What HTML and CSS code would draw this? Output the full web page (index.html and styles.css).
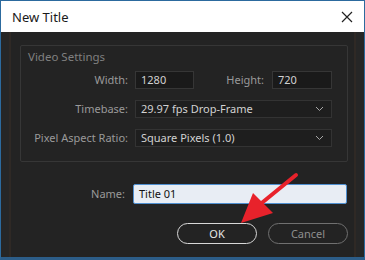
FILE: index.html
```html
<!DOCTYPE html>
<html lang="en">
<head>
  <meta charset="UTF-8" />
  <title>New Title</title>
  <link rel="stylesheet" href="styles.css">
</head>
<body>

<div class="window">
  <!-- Title bar -->
  <div class="titlebar">
    <span class="title">New Title</span>
    <svg class="close" width="12" height="12" viewBox="0 0 12 12">
      <path d="M1 1 L11 11 M11 1 L1 11" stroke="#222" stroke-width="1.2" fill="none"/>
    </svg>
  </div>

  <!-- Dialog body -->
  <div class="dialog">
    <div class="panel">
      <div class="group">
        <div class="legend">Video Settings</div>
        <div class="rows">
          <label class="lbl">Width:</label>
          <div class="pair">
            <div class="field small">1280</div>
            <div class="pair-right">
              <label class="lbl">Height:</label>
              <div class="field small">720</div>
            </div>
          </div>

          <label class="lbl">Timebase:</label>
          <div class="select">
            <span>29.97 fps Drop-Frame</span>
            <svg width="9" height="6" viewBox="0 0 9 6"><path d="M1 1 L4.5 4.5 L8 1" stroke="#a8a8a8" fill="none"/></svg>
          </div>

          <label class="lbl">Pixel Aspect Ratio:</label>
          <div class="select">
            <span>Square Pixels (1.0)</span>
            <svg width="9" height="6" viewBox="0 0 9 6"><path d="M1 1 L4.5 4.5 L8 1" stroke="#a8a8a8" fill="none"/></svg>
          </div>
        </div>
      </div>

      <div class="name-row">
        <label class="lbl">Name:</label>
        <div class="name-field">Title 01</div>
      </div>

      <div class="buttons">
        <button class="btn ok">OK</button>
        <button class="btn cancel">Cancel</button>
      </div>
    </div>
  </div>

  <!-- annotation arrow -->
  <svg class="arrow" width="365" height="260" viewBox="0 0 365 260">
    <line x1="296" y1="175" x2="258" y2="206" stroke="#e8222b" stroke-width="4" stroke-linecap="round"/>
    <polygon points="241,223 253,193 273,213" fill="#e8222b"/>
  </svg>
</div>

</body>
</html>
```

FILE: styles.css
```css
* {
  box-sizing: border-box;
}

html, body {
  margin: 0;
  padding: 0;
  background: #1b3550;
  font-family: 'Noto Sans', 'Open Sans', sans-serif;
}

.window {
  position: relative;
  width: 365px;
  height: 260px;
  border: 1px solid #2c6a9e;
  border-bottom: 3px solid #2c5d88;
  display: flex;
  flex-direction: column;
  background: #262626;
}

.titlebar {
  height: 31px;
  background: #fff;
  display: flex;
  align-items: center;
  justify-content: space-between;
  padding: 0 10px 0 11px;
}

.title {
  font-size: 13px;
  color: #1a1a1a;
}

.close {
  margin-right: 1px;
}

.dialog {
  flex: 1;
  padding: 0 8px 0 8px;
  display: flex;
}

.panel {
  flex: 1;
  background: #232323;
  border-left: 2px solid #2f2925;
  border-right: 2px solid #2f2925;
  padding: 13px 6px 0 9px;
}

.group {
  border: 1px solid #363636;
  border-radius: 2px;
  height: 117px;
  padding: 3px 13px 0 0;
}

.legend {
  font-size: 11.5px;
  color: #808080;
  padding-left: 7px;
  height: 16px;
  line-height: 16px;
}

.rows {
  margin-top: 6px;
  display: grid;
  grid-template-columns: 107px 197px;
  column-gap: 7px;
  row-gap: 11px;
}

.lbl {
  font-size: 11px;
  color: #9a9a9a;
  text-align: right;
  line-height: 18px;
  white-space: nowrap;
}

.pair {
  display: flex;
  justify-content: space-between;
}

.pair-right {
  display: flex;
  gap: 8px;
}

.field {
  height: 18px;
  background: #1a1a1a;
  border: 1px solid #363636;
  color: #d2d2d2;
  font-size: 11px;
  line-height: 16px;
  padding-left: 5px;
}

.small {
  width: 59px;
}

.pair-right .small {
  width: 60px;
}

.select {
  height: 18px;
  background: #1e1e1e;
  border: 1px solid #333;
  color: #d2d2d2;
  font-size: 11px;
  line-height: 16px;
  padding: 0 7px 0 5px;
  display: flex;
  align-items: center;
  justify-content: space-between;
}

.name-row {
  margin-top: 22px;
  display: grid;
  grid-template-columns: 105px 214px;
  column-gap: 8px;
}

.name-field {
  height: 20px;
  background: #e8edf4;
  border: 1px solid #4f8fd0;
  border-radius: 2px;
  color: #111;
  font-size: 11px;
  line-height: 18px;
  padding-left: 5px;
}

.name-row .lbl {
  line-height: 20px;
}

.buttons {
  margin-top: 19px;
  display: flex;
  justify-content: flex-end;
  gap: 11px;
}

.btn {
  width: 80px;
  height: 21px;
  border-radius: 11px;
  background: #232323;
  font-family: 'Noto Sans', 'Open Sans', sans-serif;
  font-size: 11px;
  padding: 0;
}

.ok {
  border: 1px solid #d8d8d8;
  color: #e6e6e6;
}

.cancel {
  border: 1px solid #707070;
  color: #8e8e8e;
}

.arrow {
  position: absolute;
  left: -1px;
  top: -1px;
  pointer-events: none;
}
```
